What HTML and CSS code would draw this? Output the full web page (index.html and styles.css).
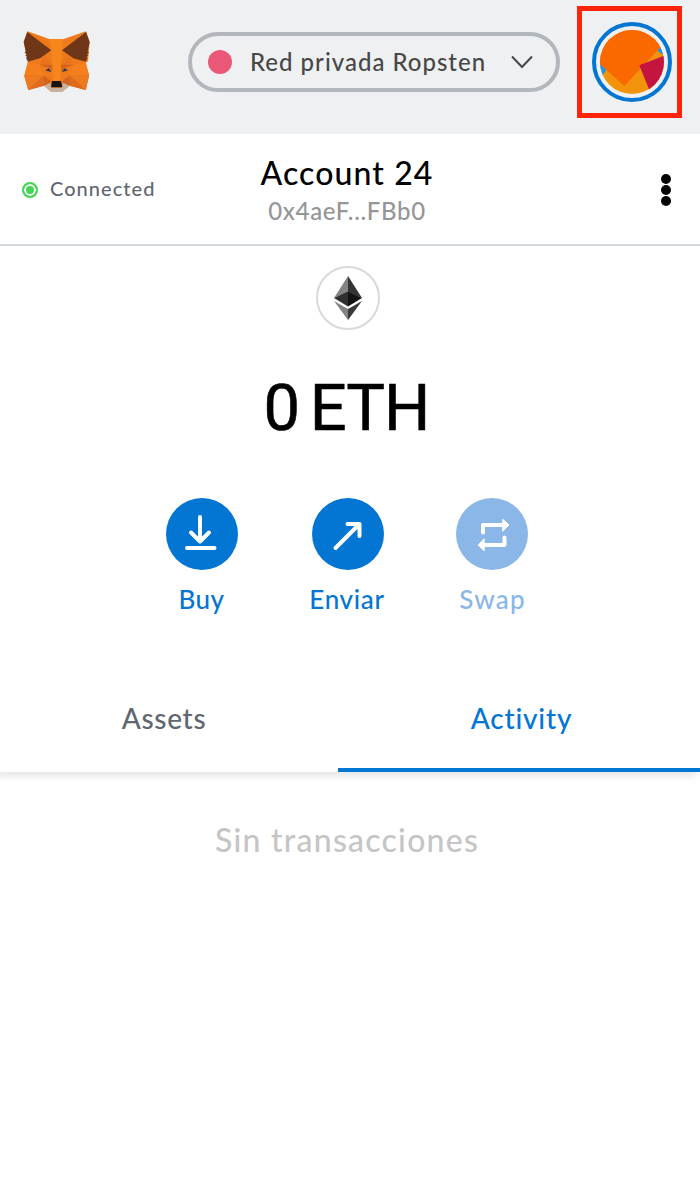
FILE: index.html
```html
<!DOCTYPE html>
<html lang="es">
<head>
<meta charset="utf-8">
<title>MetaMask</title>
<link rel="stylesheet" href="styles.css">
</head>
<body>
<header class="app-header">
  <svg class="fox" viewBox="30 30 216 192">
    <path fill="#ee7a1c" d="M52 34 118 57H161L228 34 239 66 234 124 227 128 237 164 227 210 179 197 156 216H124L102 197 55 210 43 167 54 124 41 66Z"/>
    <path fill="#f6851b" d="M118 57H161L156 91 153 150 151 184H128L127 150 124 91Z"/>
    <path fill="#f47f1c" d="M54 125 88 134 102 167H43ZM227 125 192 134 178 167H237Z"/>
    <path fill="#6f3718" d="M52 36 124 91 90 115 54 125 48 114 51 111 46 106 50 103 44 98 47 94 41 66ZM228 36 156 91 190 115 227 125 232 114 229 111 235 106 230 103 237 98 233 94 239 66Z"/>
    <path fill="#e8741e" d="M104 107 88 134H127ZM176 107 192 134H153Z"/>
    <path fill="#d2641d" d="M88 134H127V152L117 144ZM192 134H153V152L163 144Z"/>
    <path fill="#df6b20" d="M43 167H102L118 187 102 197 55 210ZM237 167H178L162 187 179 197 227 210Z"/>
    <path fill="#ee7a1f" d="M43 167H98L55 210ZM237 167H182L227 210Z"/>
    <path fill="#d2621f" d="M102 167 122 182 118 193 102 197ZM178 167 158 182 162 193 179 197Z"/>
    <path fill="#233447" d="M106 151 117 145 124 156ZM174 151 163 145 156 156Z"/>
    <path fill="#c9b1a2" d="M102 197 121 188 124 203H156L159 188 179 197 156 216H124Z"/>
    <path fill="#161616" d="M126 183H153L157 202H123Z"/>
  </svg>
  <div class="network">
    <span class="network-dot"></span>
    <span class="network-name">Red privada Ropsten</span>
    <svg class="chevron" viewBox="0 0 22 14"><path d="M1 1.5 11 12 21 1.5"/></svg>
  </div>
  <div class="highlight">
    <div class="account-ring">
      <svg class="identicon" viewBox="90 90 192 192">
        <defs><clipPath id="disc"><circle cx="186" cy="186" r="96"/></clipPath></defs>
        <g clip-path="url(#disc)">
          <path fill="#f3920b" d="M80 80H290V290H80Z"/>
          <path fill="#2196e8" d="M80 180 109 209 99 224H80ZM260 150 272 140 290 155V172Z"/>
          <path fill="#fa6900" d="M80 80H290V122L163 258 80 184Z"/>
          <path fill="#c5143f" d="M208 196 290 164V290H246Z"/>
        </g>
      </svg>
    </div>
  </div>
</header>
<section class="account-bar">
  <div class="status"><span class="status-dot"></span><span class="status-text">Connected</span></div>
  <div class="account">
    <div class="account-name">Account 24</div>
    <div class="address">0x4aeF...FBb0</div>
  </div>
  <div class="menu"><i></i><i></i><i></i></div>
</section>
<main>
  <section class="balance">
    <div class="token">
      <svg viewBox="0 0 28 44">
        <path fill="#828384" d="M14 0V16L0 22Z"/><path fill="#343434" d="M14 0V16L28 22Z"/>
        <path fill="#2f3030" d="M14 15.5V30.5L0 22Z"/><path fill="#131313" d="M14 15.5V30.5L28 22Z"/>
        <path fill="#828384" d="M0 25 14 33V44Z"/><path fill="#393939" d="M28 25 14 33V44Z"/>
      </svg>
    </div>
    <div class="amount">0 ETH</div>
  </section>
  <section class="actions">
    <div class="action">
      <svg class="action-icon" viewBox="0 0 72 72"><path d="M34 19V43M25 34.5 34 43.5 43 34.5M21 50H48.5"/></svg>
      <span class="buy-label">Buy</span>
    </div>
    <div class="action">
      <svg class="action-icon" viewBox="0 0 72 72"><path d="M23.5 50 47 26.5M35.5 26H47.5V38"/></svg>
      <span class="send-label">Enviar</span>
    </div>
    <div class="action disabled">
      <svg class="action-icon" viewBox="0 0 72 72"><path d="M27 34.5V27H47M48.5 39.5V47H28"/><path class="head" d="M47 21.5 53 27 47 33ZM28 41 22 47 28 52.5Z"/></svg>
      <span class="swap-label">Swap</span>
    </div>
  </section>
  <nav class="tabs">
    <div class="tab"><span class="assets-label">Assets</span></div>
    <div class="tab active"><span class="activity-label">Activity</span></div>
  </nav>
  <p class="empty">Sin transacciones</p>
</main>
</body>
</html>
```
FILE: styles.css
```css
* { box-sizing: border-box; }
body {
  margin: 0;
  width: 700px;
  height: 1180px;
  overflow: hidden;
  background: #fff;
  color: #000;
  font-family: Lato, "Open Sans", sans-serif;
  font-weight: 500;
  white-space: nowrap;
}
svg { display: block; flex: none; }
.app-header {
  display: flex;
  height: 134px;
  padding-left: 20px;
  background: #eff0f2;
}
.fox { width: 72px; height: 64px; margin-top: 30px; }
.network {
  display: flex;
  align-items: center;
  width: 372px;
  height: 60px;
  margin: 32px 0 0 96px;
  padding: 0 23px 0 16px;
  border: 4px solid #b1b7bc;
  border-radius: 30px;
}
.network-dot { width: 24px; height: 24px; border-radius: 50%; background: #eb5877; }
.network-name {
  flex: 1;
  margin: -2px 0 0 18px;
  font-size: 24px;
  letter-spacing: 1px;
  color: #484848;
}
.chevron { width: 22px; height: 14px; fill: none; stroke: #484848; stroke-width: 2; }
.highlight {
  width: 105px;
  height: 112px;
  margin: 6px 0 0 17px;
  padding: 11px 10px;
  border: 5px solid #ff2409;
}
.account-ring {
  display: flex;
  align-items: center;
  justify-content: center;
  width: 80px;
  height: 80px;
  border: 4px solid #0376d4;
  border-radius: 50%;
}
.identicon { width: 64px; height: 64px; }
.account-bar {
  display: grid;
  grid-template-columns: 200px 294px 206px;
  height: 112px;
  border-bottom: 2px solid #d2d8dd;
}
.status { display: flex; align-items: center; padding-left: 22px; height: 112px; }
.status-dot {
  width: 16px;
  height: 16px;
  border: 2px solid #43d655;
  border-radius: 50%;
  background: #43d655;
  box-shadow: inset 0 0 0 2px #fff;
}
.status-text { margin: -4px 0 0 12px; font-size: 20px; letter-spacing: 1.05px; color: #5f6771; }
.account { text-align: center; padding-top: 18px; }
.account-name { font-size: 32px; line-height: 42px; letter-spacing: 1.1px; }
.address { font-size: 24px; line-height: 34px; color: #959697; letter-spacing: 0.65px; }
.menu {
  display: flex;
  flex-direction: column;
  gap: 1px;
  align-items: center;
  justify-content: center;
  height: 112px;
  padding-left: 138px;
}
.menu i { width: 10px; height: 10px; border-radius: 50%; background: #000; }
.balance { display: flex; flex-direction: column; align-items: center; width: 696px; padding-top: 20px; }
.token {
  display: flex;
  align-items: center;
  justify-content: center;
  width: 64px;
  height: 64px;
  border: 2px solid #d9d9d9;
  border-radius: 50%;
}
.token svg { width: 28px; height: 44px; }
.amount {
  margin: 39px 3px 0 0;
  font-family: Roboto, sans-serif;
  font-weight: 400;
  font-size: 65px;
  line-height: 78px;
  letter-spacing: -1px;
  word-spacing: -4.5px;
  -webkit-text-stroke: 0.6px #000;
}
.actions { display: grid; grid-template-columns: 146px 144px 146px; width: 436px; margin: 51px 0 0 129px; }
.action { display: flex; flex-direction: column; align-items: center; font-size: 26px; line-height: 34px; color: #0376d4; }
.action:nth-child(2) { padding-left: 1px; }
.action:nth-child(3) { padding-right: 1px; }
.action-icon {
  width: 72px;
  height: 72px;
  margin-bottom: 12px;
  border-radius: 50%;
  background: #0376d4;
  fill: none;
  stroke: #fff;
  stroke-width: 4;
  stroke-linecap: round;
  stroke-linejoin: round;
}
.head { fill: #fff; stroke-width: 1; }
.buy-label { letter-spacing: 0.4px; margin-right: 1px; }
.send-label { letter-spacing: 0.7px; margin-right: 1px; }
.swap-label { letter-spacing: 1.2px; margin-left: 2px; }
.disabled { color: #8ab6e8; }
.disabled .action-icon { background: #8ab6e8; }
.tabs {
  display: grid;
  grid-template-columns: 338px 362px;
  height: 106px;
  margin-top: 50px;
  box-shadow: -4px 4px 8px rgba(0, 0, 0, 0.11);
}
.tab {
  display: flex;
  align-items: center;
  justify-content: center;
  padding: 0 10px 3px 0;
  font-size: 28px;
  color: #5f6771;
  background: #fff;
}
.active { padding: 1px 0 0 5px; border-bottom: 4px solid #0376d4; color: #0376d4; }
.assets-label { letter-spacing: 0.7px; }
.activity-label { letter-spacing: 0.8px; }
/* keeps the tab shadow from spreading above the bar */
.tabs { clip-path: inset(0 0 -20px 0); }
.empty {
  width: 694px;
  margin: 47px 0 0;
  text-align: center;
  font-size: 32px;
  line-height: 42px;
  letter-spacing: 1.25px;
  color: #c5c5c5;
}
```
